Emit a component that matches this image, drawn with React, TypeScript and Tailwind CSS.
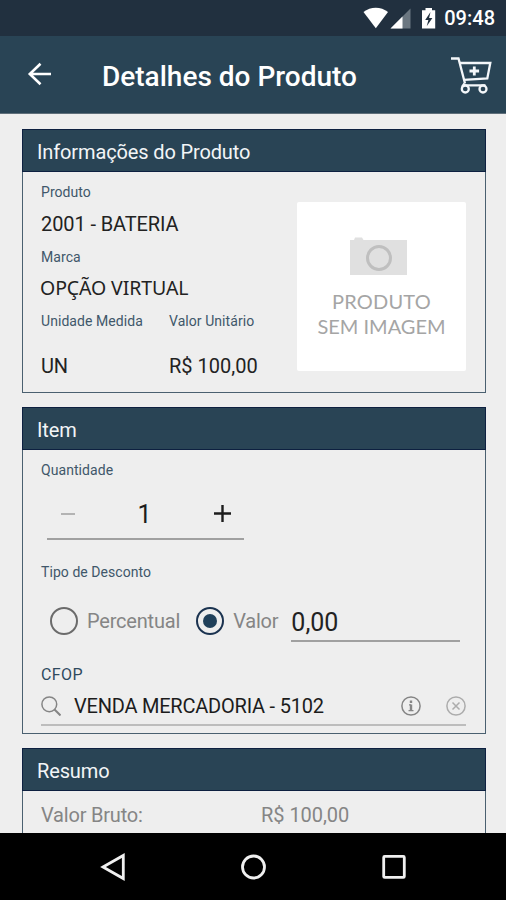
import { useState } from 'react';
import type { ReactNode } from 'react';

interface CardProps {
  title: string;
  className?: string;
  children: ReactNode;
}

function Card({ title, className = '', children }: CardProps) {
  return (
    <section className={`mx-[22px] w-[464px] shrink-0 border border-[#4a6070] ${className}`}>
      <h2 className="-mx-px -mt-px h-[43px] border border-[#0d2040] bg-[#294455] pl-[14px] text-[20px] leading-[44px] tracking-[-0.13px] text-[#f2f5f7]">
        {title}
      </h2>
      {children}
    </section>
  );
}

function Label({ children }: { children: ReactNode }) {
  return <div className="h-5 whitespace-nowrap text-[14px] leading-5 tracking-[0.06px] text-[#40576a]">{children}</div>;
}

function StatusBar() {
  return (
    <div className="flex h-9 items-center justify-end bg-[#21303f] pr-[11px]">
      <svg className="h-[22px] w-[76px]" viewBox="0 0 76 22" fill="none">
        <path d="M1.5 5C8.5-.8 19-.8 26 5L13.8 21.2Z" fill="#fff" />
        <path d="M28.5 21.5 48.5 1.5V21.5Z" fill="#6b7781" />
        <path d="M28.5 21.5 40.5 9.5V21.5Z" fill="#fff" />
        <path d="M60 3.2h3.5V1h6.5v2.2h3.2v18.3H60Z" fill="#fff" />
        <path d="M68.5 5 63.2 13h3.2l-1.7 6.3 5.7-8.3h-3.3Z" fill="#21303f" />
      </svg>
      <span className="ml-[6px] text-[20px] font-medium leading-9 text-white">09:48</span>
    </div>
  );
}

function Header() {
  return (
    <header className="flex h-[78px] items-center border-b border-[#5f6f7a] bg-[#294455] text-white">
      <svg className="-mt-px ml-[27px] h-6 w-6" viewBox="0 0 24 24" fill="none" stroke="#fff" strokeWidth="2.6">
        <path d="M13.5 1.8 2.8 12l10.7 10.2M2.8 12H24" />
      </svg>
      <h1 className="ml-[51px] whitespace-nowrap pt-1 text-[28px] font-medium">Detalhes do Produto</h1>
      <svg className="ml-auto mr-[14px] h-10 w-[42px]" viewBox="0 0 42 40" fill="none" stroke="#f4f7fa" strokeWidth="2.3">
        <path d="M1 3.5h7.5l6.5 25" />
        <path d="M9.5 8H40.3L37.3 23.5 14 24.8" />
        <path d="M14.5 28.5 12 32M15 30.3h20.5" />
        <circle cx="15.3" cy="34" r="3.5" fill="#294455" />
        <circle cx="33" cy="34" r="3.5" fill="#294455" />
        <path d="M24.3 11.5v9M19.5 16h9.6" strokeWidth="2.8" />
      </svg>
    </header>
  );
}

function ProductInfo() {
  return (
    <Card title="Informações do Produto" className="mt-[15px] h-[264px]">
      <div className="flex">
        <div className="w-[274px] pl-[18px] pt-[10px] text-[20px] tracking-[-0.1px] text-[#222]">
          <Label>Produto</Label>
          <div className="h-[45px] leading-[44px]">2001 - BATERIA</div>
          <Label>Marca</Label>
          <div className="-ml-px h-11 font-['Noto_Sans','Roboto',sans-serif] text-[19.5px] leading-[42px]">OPÇÃO VIRTUAL</div>
          <div className="flex">
            <div className="w-32">
              <Label>Unidade Medida</Label>
              <div className="mt-5 leading-[31px]">UN</div>
            </div>
            <div>
              <Label>Valor Unitário</Label>
              <div className="mt-5 leading-[31px] tracking-[0px]">R$ 100,00</div>
            </div>
          </div>
        </div>
        <div className="mt-[30px] flex h-[169px] w-[169px] flex-col items-center rounded-[2px] bg-white pt-[34px] font-['Lato',sans-serif] text-[20px] leading-[25px] text-[#a5a5a5]">
          <svg className="mr-[6px] h-[39px] w-[57px]" viewBox="0 0 57 39">
            <path d="M0 4h4l1-2.5h7L13.5 4H57v35H0Z" fill="#e0e0e0" />
            <circle cx="29" cy="22" r="11.5" fill="none" stroke="#bfbfbf" strokeWidth="3" />
          </svg>
          <span className="mt-[14px] tracking-[0.2px]">PRODUTO</span>
          <span className="whitespace-nowrap">SEM IMAGEM</span>
        </div>
      </div>
    </Card>
  );
}

function Radio({ label, checked, onSelect }: { label: string; checked: boolean; onSelect: () => void }) {
  return (
    <button className="flex items-center gap-[9px]" onClick={onSelect}>
      <span
        className={`flex h-7 w-7 items-center justify-center rounded-full border-[2.5px] ${
          checked ? 'border-[#1b3350]' : 'border-[#6b6b6b]'
        }`}
      >
        {checked && <span className="h-[14px] w-[14px] rounded-full bg-[#20405a]" />}
      </span>
      <span className="text-[20px] tracking-[-0.2px] text-[#858585]">{label}</span>
    </button>
  );
}

function ItemForm() {
  const [quantity, setQuantity] = useState(1);
  const [discount, setDiscount] = useState('valor');

  return (
    <Card title="Item" className="mt-[14px] h-[327px]">
      <div className="pl-[18px] pt-[10px]">
        <Label>Quantidade</Label>
        <div className="ml-[6px] flex h-[60px] w-[197px] items-center justify-between border-b-2 border-[#a0a0a0] pl-[14px] pr-[13px] pt-[9px]">
          <button onClick={() => setQuantity(Math.max(1, quantity - 1))}>
            <svg className="h-4 w-[14px]" viewBox="0 0 14 16" stroke="#b3b3b3" strokeWidth="2">
              <path d="M0 8h14" />
            </svg>
          </button>
          <span className="pt-0.5 text-[25px] leading-[30px] text-[#1c1c1c]">{quantity}</span>
          <button onClick={() => setQuantity(quantity + 1)}>
            <svg className="h-[17px] w-[17px]" viewBox="0 0 17 17" stroke="#1c1c1c" strokeWidth="2.4">
              <path d="M0 8.5h17M8.5 0v17" />
            </svg>
          </button>
        </div>
        <div className="mt-[22px]">
          <Label>Tipo de Desconto</Label>
        </div>
        <div className="ml-[9px] mt-[19px] flex h-[41px]">
          <div className="mr-4 flex h-10 items-center">
            <Radio label="Percentual" checked={discount === 'percentual'} onSelect={() => setDiscount('percentual')} />
          </div>
          <div className="flex h-10 items-center">
            <Radio label="Valor" checked={discount === 'valor'} onSelect={() => setDiscount('valor')} />
          </div>
          <div className="ml-[13px] h-[41px] w-[169px] border-b-2 border-[#a0a0a0] text-[25px] leading-[44px] text-[#222]">0,00</div>
        </div>
        <div className="mt-[21px] h-6 text-[16px] leading-6 tracking-[0.4px] text-[#2f4a5e]">CFOP</div>
        <div className="flex h-[39px] w-[425px] items-center border-b-2 border-[#bdbdbd]">
          <svg className="h-5 w-5" viewBox="0 0 20 20" fill="none" stroke="#858585" strokeWidth="1.5">
            <circle cx="8.3" cy="8.3" r="7.4" />
            <path d="M13.5 13.5 19.5 19.5" strokeWidth="2" />
          </svg>
          <span className="ml-[13px] whitespace-nowrap text-[20px] tracking-[-0.22px] text-[#1c1c1c]">VENDA MERCADORIA - 5102</span>
          <svg className="ml-auto h-5 w-5" viewBox="0 0 20 20" fill="none" stroke="#858585" strokeWidth="1.5">
            <circle cx="10" cy="10" r="9.1" />
            <path d="M10 4.5v2.5M10 8.5v6" strokeWidth="2.4" />
            <path d="M8 8.8h2M7.5 14.6h5" strokeWidth="1.3" />
          </svg>
          <svg className="ml-[25px] h-5 w-5" viewBox="0 0 20 20" fill="none" stroke="#acacac" strokeWidth="1.5">
            <circle cx="10" cy="10" r="9.1" />
            <path d="m6.5 6.5 7 7M13.5 6.5l-7 7" />
          </svg>
        </div>
      </div>
    </Card>
  );
}

function Summary() {
  return (
    <Card title="Resumo" className="mt-[14px] h-[120px]">
      <div className="flex pl-[18px] pt-2 text-[20px] leading-8 text-[#858585]">
        <span className="w-[220px] tracking-[-0.2px]">Valor Bruto:</span>
        <span className="tracking-[-0.05px]">R$ 100,00</span>
      </div>
    </Card>
  );
}

function NavBar() {
  return (
    <nav className="flex h-[67px] items-center justify-between bg-black pl-[100px] pr-[98px]">
      <svg className="h-7 w-7" viewBox="0 0 28 28" fill="none" stroke="#f0f0f0" strokeWidth="2.8">
        <path d="M3 14 23.3 2.5v23Z" />
      </svg>
      <svg className="h-7 w-7" viewBox="0 0 28 28" fill="none" stroke="#f0f0f0" strokeWidth="2.8">
        <circle cx="13.5" cy="14" r="11" />
      </svg>
      <svg className="h-7 w-7" viewBox="0 0 28 28" fill="none" stroke="#f0f0f0" strokeWidth="2.8">
        <rect x="3.7" y="3.4" width="20.6" height="21" rx="1" />
      </svg>
    </nav>
  );
}

export default function App() {
  return (
    <div className="flex h-[900px] w-[506px] flex-col overflow-hidden bg-[#eeeeee] font-['Roboto',sans-serif]">
      <StatusBar />
      <Header />
      <main className="flex min-h-0 flex-1 flex-col overflow-hidden">
        <ProductInfo />
        <ItemForm />
        <Summary />
      </main>
      <NavBar />
    </div>
  );
}
